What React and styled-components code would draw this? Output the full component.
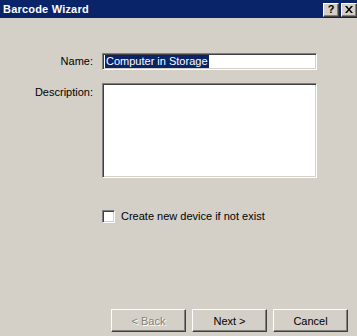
import React from "react";
import styled, { createGlobalStyle } from "styled-components";

const GlobalStyle = createGlobalStyle`
  html, body {
    margin: 0;
    padding: 0;
    background: #d4d0c8;
  }
  * {
    box-sizing: border-box;
  }
`;

const Window = styled.div`
  width: 357px;
  height: 336px;
  display: flex;
  flex-flow: column;
  background: #d4d0c8;
  font-family: "Liberation Sans", Arial, sans-serif;
  font-size: 11px;
  color: #000;
  overflow: hidden;
`;

const TitleBar = styled.div`
  height: 18px;
  flex: none;
  display: flex;
  align-items: center;
  justify-content: space-between;
  padding: 0 0 0 3px;
  background: #0a246a;
`;

const Title = styled.span`
  color: #fff;
  font-weight: bold;
  font-size: 11px;
  letter-spacing: 0.2px;
`;

const CaptionButtons = styled.div`
  display: flex;
  gap: 2px;
  padding-top: 1px;
`;

const CaptionButton = styled.div`
  width: 16px;
  height: 14px;
  display: flex;
  align-items: center;
  justify-content: center;
  background: #d4d0c8;
  border: 1px solid;
  border-color: #fff #404040 #404040 #fff;
  box-shadow: inset -1px -1px #808080;
  font-weight: bold;
  font-size: 11px;
  line-height: 1;
`;

const Body = styled.div`
  flex: 1;
  display: flex;
  flex-flow: column;
  padding: 35px 9px 4px 0;
`;

const FormGrid = styled.div`
  display: grid;
  grid-template-columns: 93px 215px;
  grid-template-rows: 17px 95px;
  column-gap: 9px;
  row-gap: 13px;
`;

const Label = styled.label`
  text-align: right;
  white-space: nowrap;
  line-height: 13px;
  padding-top: ${(p) => p.$top || 2}px;
`;

const Field = styled.div`
  background: #fff;
  border: 1px solid;
  border-color: #808080 #fff #fff #808080;
  box-shadow: inset 1px 1px #404040, inset -1px -1px #d4d0c8;
  padding: 1px 2px;
  white-space: nowrap;
  overflow: hidden;
`;

const Selected = styled.span`
  display: inline-block;
  background: #0a246a;
  color: #fff;
  line-height: 13px;
  padding: 0 1px;
`;

const CheckRow = styled.div`
  display: flex;
  align-items: center;
  gap: 6px;
  margin: 32px 0 0 102px;
  line-height: 13px;
`;

const CheckBox = styled.span`
  width: 13px;
  height: 13px;
  flex: none;
  background: #fff;
  border: 1px solid;
  border-color: #808080 #fff #fff #808080;
  box-shadow: inset 1px 1px #404040, inset -1px -1px #d4d0c8;
`;

const ButtonRow = styled.div`
  margin-top: auto;
  display: flex;
  justify-content: flex-end;
  gap: 6px;
`;

const Button = styled.button`
  width: 75px;
  height: 23px;
  padding: 0;
  background: #d4d0c8;
  border: 1px solid;
  border-color: #fff #404040 #404040 #fff;
  box-shadow: inset -1px -1px #808080;
  font-family: "Liberation Sans", Arial, sans-serif;
  font-size: 11px;
  color: ${(p) => (p.disabled ? "#808080" : "#000")};
  text-shadow: ${(p) => (p.disabled ? "1px 1px #fff" : "none")};
`;

export default function App() {
  return (
    <Window>
      <GlobalStyle />
      <TitleBar>
        <Title>Barcode Wizard</Title>
        <CaptionButtons>
          <CaptionButton>?</CaptionButton>
          <CaptionButton>
            <svg width="8" height="7" viewBox="0 0 8 7">
              <path d="M0 0h2l2 2.5L6 0h2L5 3.5 8 7H6L4 4.5 2 7H0l3-3.5z" fill="#000" />
            </svg>
          </CaptionButton>
        </CaptionButtons>
      </TitleBar>
      <Body>
        <FormGrid>
          <Label>Name:</Label>
          <Field>
            <Selected>Computer in Storage</Selected>
          </Field>
          <Label $top={3}>Description:</Label>
          <Field />
        </FormGrid>
        <CheckRow>
          <CheckBox />
          <span>Create new device if not exist</span>
        </CheckRow>
        <ButtonRow>
          <Button disabled>&lt; Back</Button>
          <Button>Next &gt;</Button>
          <Button>Cancel</Button>
        </ButtonRow>
      </Body>
    </Window>
  );
}
